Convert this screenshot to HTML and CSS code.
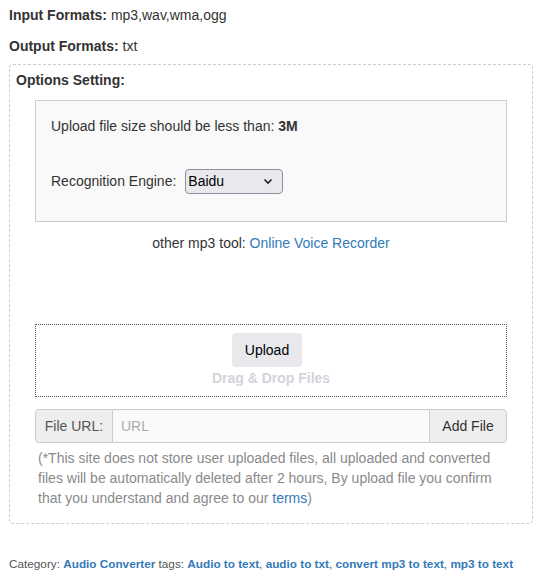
FILE: index.html
```html
<!DOCTYPE html>
<html>
<head>
<meta charset="utf-8">
<link rel="stylesheet" href="styles.css">
</head>
<body>
<p class="fmt"><b>Input Formats:</b> mp3,wav,wma,ogg</p>
<p class="fmt"><b>Output Formats:</b> txt</p>
<div class="options">
  <div class="opt-title">Options Setting:</div>
  <div class="panel">
    <div class="size-line">Upload file size should be less than: <b>3M</b></div>
    <div class="engine-row">
      <span>Recognition Engine:</span>
      <span class="select">Baidu
        <svg class="chev" width="10" height="7" viewBox="0 0 10 7"><path d="M1.5 1.5 L5 5 L8.5 1.5" fill="none" stroke="#222" stroke-width="1.6"/></svg>
      </span>
    </div>
  </div>
  <div class="other">other mp3 tool: <a href="#">Online Voice Recorder</a></div>
  <div class="drop">
    <button class="upload-btn">Upload</button>
    <div class="drag">Drag &amp; Drop Files</div>
  </div>
  <div class="url-group">
    <span class="addon">File URL:</span>
    <span class="url-input">URL</span>
    <span class="add-btn">Add File</span>
  </div>
  <div class="note">(*This site does not store user uploaded files, all uploaded and converted files will be automatically deleted after 2 hours, By upload file you confirm that you understand and agree to our <a href="#">terms</a>)</div>
</div>
<div class="category">Category: <a href="#">Audio Converter</a> tags: <a href="#">Audio to text</a>, <a href="#">audio to txt</a>, <a href="#">convert mp3 to text</a>, <a href="#">mp3 to text</a></div>
</body>
</html>
```
FILE: styles.css
```css
html, body {
  margin: 0;
  background: #fff;
}
body {
  padding: 0 17px 0 9px;
  font-family: "Liberation Sans", Arial, sans-serif;
  font-size: 14px;
  line-height: 20px;
  color: #333;
}
a {
  color: #337ab7;
  text-decoration: none;
}
.fmt {
  margin: 0;
}
.fmt:first-child {
  padding-top: 5px;
}
.fmt + .fmt {
  margin-top: 11px;
}
.options {
  margin-top: 8px;
  border: 1px dashed #ccc;
  border-radius: 4px;
  padding: 5px 6px 15px;
}
.opt-title {
  font-weight: bold;
}
.panel {
  margin: 10px 19px 0;
  border: 1px solid #ccc;
  background: #f9f9f9;
  padding: 15px 15px 27px;
}
.engine-row {
  margin-top: 32px;
  display: flex;
  align-items: center;
  gap: 9px;
  height: 26px;
}
.select {
  box-sizing: border-box;
  width: 98px;
  height: 25px;
  border: 1px solid #8f8f9d;
  border-radius: 4px;
  background: #e9e9ed;
  color: #000;
  display: flex;
  align-items: center;
  justify-content: space-between;
  padding: 0 9px 0 2px;
  font-size: 14px;
}
.chev {
  display: block;
}
.other {
  margin-top: 11px;
  text-align: center;
}
.drop {
  margin: 71px 19px 0;
  border: 1px dotted #555;
  height: 71px;
  box-sizing: content-box;
  padding: 0;
  display: flex;
  flex-direction: column;
  align-items: center;
}
.upload-btn {
  margin-top: 8px;
  margin-right: 8px;
  height: 34px;
  width: 70px;
  border: none;
  border-radius: 4px;
  background: #e9e9ed;
  color: #000;
  font-family: "Liberation Sans", Arial, sans-serif;
  font-size: 14px;
  padding: 0;
}
.drag {
  margin-top: 1px;
  font-weight: bold;
  color: #d3d3da;
}
.url-group {
  margin: 12px 19px 0;
  display: flex;
  height: 34px;
  box-sizing: border-box;
}
.addon, .add-btn {
  box-sizing: border-box;
  height: 34px;
  width: 78px;
  background: #eee;
  border: 1px solid #ccc;
  color: #555;
  display: flex;
  align-items: center;
  justify-content: center;
}
.addon {
  border-radius: 4px 0 0 4px;
}
.add-btn {
  border-radius: 0 4px 4px 0;
  color: #333;
}
.url-input {
  flex: 1;
  box-sizing: border-box;
  height: 34px;
  border-top: 1px solid #ccc;
  border-bottom: 1px solid #ccc;
  background: #fafafa;
  color: #aaa;
  display: flex;
  align-items: center;
  padding-left: 8px;
}
.note {
  margin: 5px 19px 0;
  padding: 0 3px;
  color: #8a8a8a;
}
.category {
  margin-top: 31px;
  font-size: 11.75px;
  line-height: 18px;
  color: #555;
}
.category a {
  font-weight: bold;
}
```
